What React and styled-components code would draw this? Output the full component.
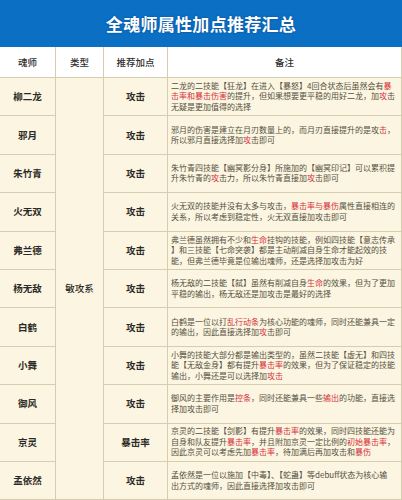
import React from "react";
import styled, { createGlobalStyle } from "styled-components";

const GlobalStyle = createGlobalStyle`
  html, body {
    margin: 0;
    padding: 0;
    background: #fbf5e1;
  }
  body {
    font-family: "Noto Sans CJK SC", "Noto Sans", sans-serif;
  }
`;

const Page = styled.div`
  width: 402px;
  height: 500px;
  overflow: hidden;
  background: #fbf5e1;
`;

const TitleBar = styled.div`
  height: 47px;
  background: #0b6fc3;
  display: flex;
  align-items: center;
  justify-content: center;
  color: #ffffff;
  font-size: 17px;
  font-weight: 700;
  letter-spacing: 0.3px;
  text-shadow: 0 0 2px rgba(0, 40, 90, 0.5);
`;

const Table = styled.div`
  display: grid;
  grid-template-columns: 55px 47px 63px 1fr;
  grid-template-rows: 30px repeat(11, 37.4px);
  gap: 1px;
  background: #d6cdb1;
  border-right: 1px solid #d6cdb1;
  border-bottom: 1px solid #d6cdb1;
`;

const HeadCell = styled.div`
  background: #ffffff;
  display: flex;
  align-items: center;
  justify-content: center;
  font-size: 9.5px;
  font-weight: 500;
  color: #2f2f2f;
`;

const Cell = styled.div`
  background: #fbf5e1;
  display: flex;
  align-items: center;
  justify-content: ${(p) => (p.$left ? "flex-start" : "center")};
  min-height: 0;
  overflow: hidden;
  font-size: ${(p) => (p.$small ? "8px" : "9.5px")};
  line-height: ${(p) => (p.$small ? "10.5px" : "13px")};
  font-weight: ${(p) => (p.$bold ? 700 : 400)};
  color: ${(p) => (p.$small ? "#55503f" : "#2b2a26")};
`;

const TypeCell = styled(Cell)`
  grid-column: 2;
  grid-row: 2 / span 11;
  font-weight: 500;
`;

const Note = styled.div`
  padding: 0 3px;
  white-space: nowrap;
`;

const Line = styled.div`
  height: 10.5px;
`;

const Red = styled.span`
  color: #d6313a;
`;

const rows = [
  {
    name: "柳二龙",
    pt: "攻击",
    lines: [
      ["二龙的二技能【狂龙】在进入【暴怒】4回合状态后虽然会有", ["暴"]],
      [["击率和暴击伤害"], "的提升，但如果想要更平稳的用好二龙，加", ["攻"], "击"],
      ["无疑是更加值得的选择"],
    ],
  },
  {
    name: "邪月",
    pt: "攻击",
    lines: [
      ["邪月的伤害是建立在月刃数量上的，而月刃直接提升的是攻", ["击"], "，"],
      ["所以邪月直接选择加", ["攻"], "击即可"],
    ],
  },
  {
    name: "朱竹青",
    pt: "攻击",
    lines: [
      ["朱竹青四技能【幽冥影分身】所施加的【幽冥印记】可以累积提"],
      ["升朱竹青的", ["攻"], "击力，所以朱竹青直接加", ["攻"], "击即可"],
    ],
  },
  {
    name: "火无双",
    pt: "攻击",
    lines: [
      ["火无双的技能并没有太多与攻击，", ["暴击率与暴伤"], "属性直接相连的"],
      ["关系，所以考虑到稳定性，火无双直接加攻击即可"],
    ],
  },
  {
    name: "弗兰德",
    pt: "攻击",
    lines: [
      ["弗兰德虽然拥有不少和", ["生命"], "挂钩的技能，例如四技能【意志传承"],
      ["】和三技能【七命突袭】都是主动削减自身生命才能起效的技"],
      ["能，但弗兰德毕竟是位输出魂师，还是选择加攻击为好"],
    ],
  },
  {
    name: "杨无敌",
    pt: "攻击",
    lines: [
      ["杨无敌的二技能【弑】虽然有削减自身", ["生命"], "的效果，但为了更加"],
      ["平稳的输出，杨无敌还是加攻击是最好的选择"],
    ],
  },
  {
    name: "白鹤",
    pt: "攻击",
    lines: [
      ["白鹤是一位以打", ["乱行动条"], "为核心功能的魂师，同时还能兼具一定"],
      ["的输出，因此直接选择加", ["攻"], "击即可"],
    ],
  },
  {
    name: "小舞",
    pt: "攻击",
    lines: [
      ["小舞的技能大部分都是输出类型的，虽然二技能【虚无】和四技"],
      ["能【无敌金身】都有提升", ["暴击率"], "的效果，但为了保证稳定的技能"],
      ["输出，小舞还是可以选择加", ["攻击"]],
    ],
  },
  {
    name: "御风",
    pt: "攻击",
    lines: [
      ["御风的主要作用是", ["控条"], "，同时还能兼具一些", ["输出"], "的功能，直接选"],
      ["择加攻击即可"],
    ],
  },
  {
    name: "京灵",
    pt: "暴击率",
    lines: [
      ["京灵的二技能【剑影】有提升", ["暴击率"], "的效果，同时四技能还能为"],
      ["自身和队友提升", ["暴击率"], "，并且附加京灵一定比例的", ["初始暴击率"], "，"],
      ["因此京灵可以考虑先加", ["暴击率"], "，待加满后再加攻击和", ["暴伤"]],
    ],
  },
  {
    name: "孟依然",
    pt: "攻击",
    lines: [
      ["孟依然是一位以施加【中毒】、【蛇蛊】等debuff状态为核心输"],
      ["出方式的魂师，因此直接选择加攻击即可"],
    ],
  },
];

function NoteText({ lines }) {
  return (
    <Note>
      {lines.map((line, i) => (
        <Line key={i}>
          {line.map((part, j) =>
            Array.isArray(part) ? <Red key={j}>{part[0]}</Red> : <span key={j}>{part}</span>
          )}
        </Line>
      ))}
    </Note>
  );
}

export default function App() {
  return (
    <Page>
      <GlobalStyle />
      <TitleBar>全魂师属性加点推荐汇总</TitleBar>
      <Table>
        <HeadCell>魂师</HeadCell>
        <HeadCell>类型</HeadCell>
        <HeadCell>推荐加点</HeadCell>
        <HeadCell>备注</HeadCell>
        <TypeCell>敏攻系</TypeCell>
        {rows.map((r, i) => (
          <React.Fragment key={r.name}>
            <Cell $bold style={{ gridColumn: 1, gridRow: i + 2 }}>{r.name}</Cell>
            <Cell $bold style={{ gridColumn: 3, gridRow: i + 2 }}>{r.pt}</Cell>
            <Cell $small $left style={{ gridColumn: 4, gridRow: i + 2 }}>
              <NoteText lines={r.lines} />
            </Cell>
          </React.Fragment>
        ))}
      </Table>
    </Page>
  );
}
